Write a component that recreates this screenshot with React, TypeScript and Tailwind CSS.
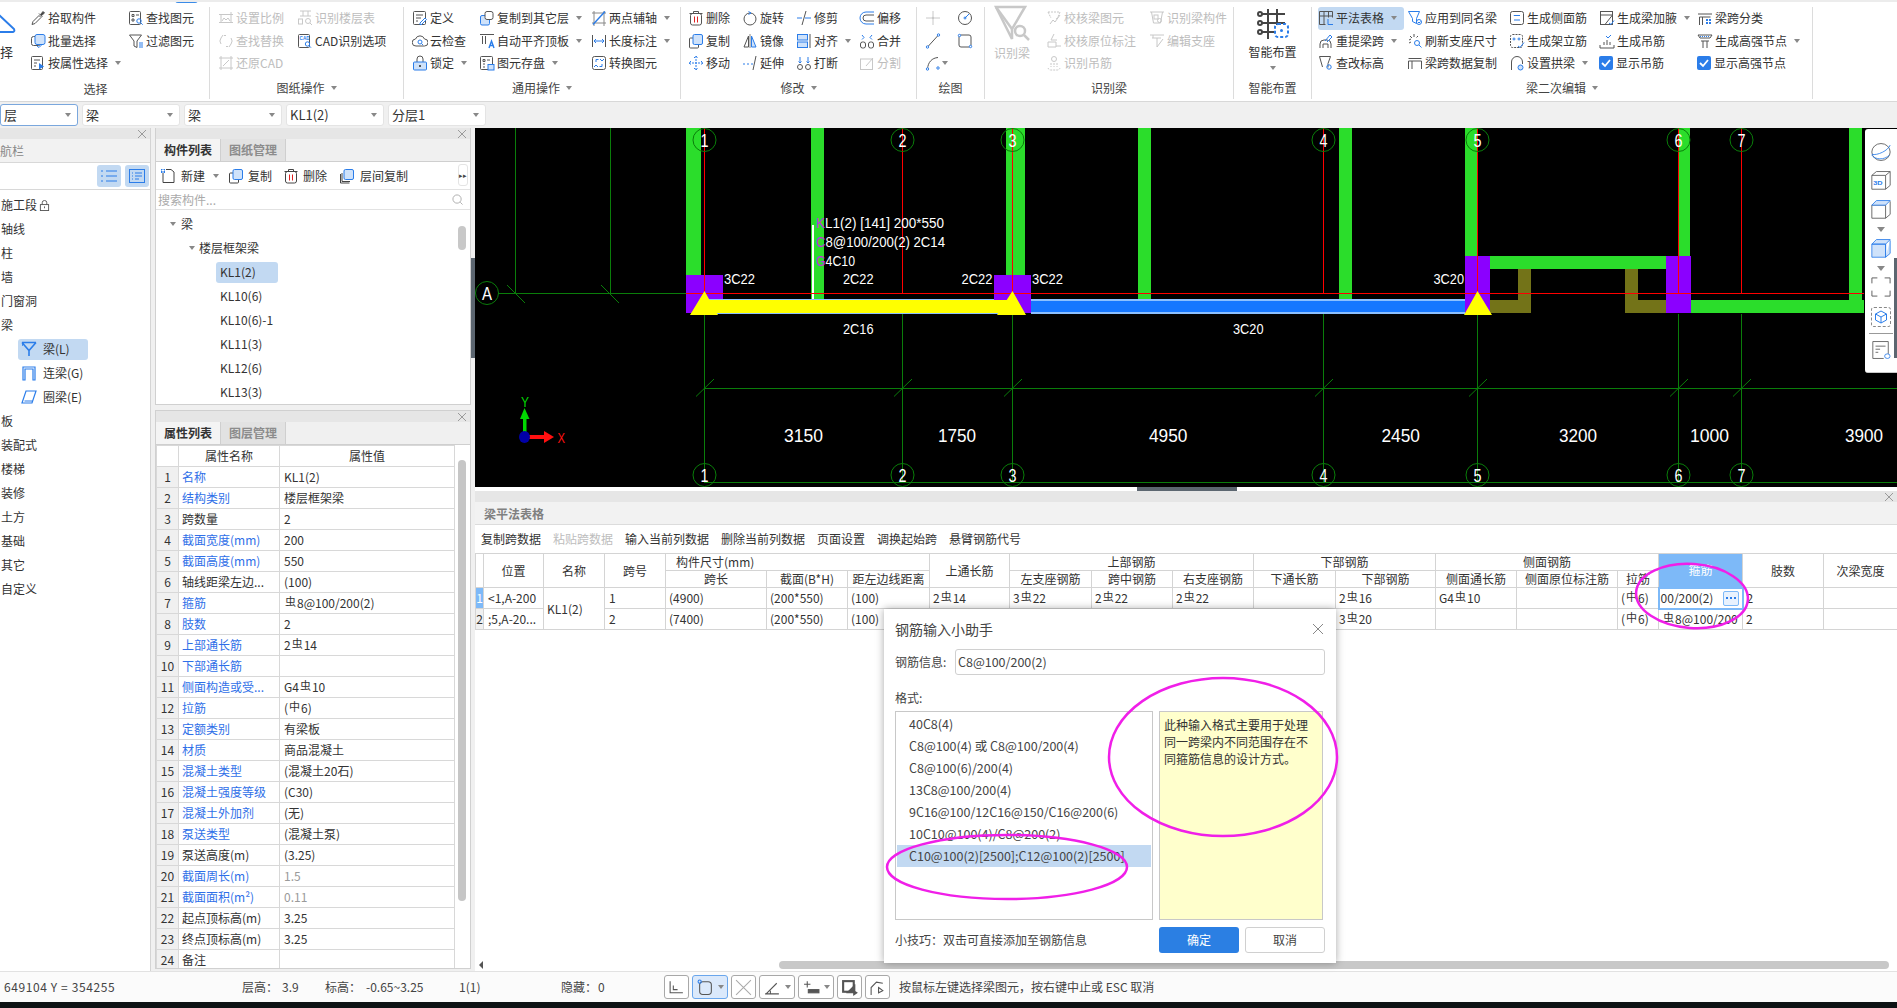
import { ReactNode } from "react";
import clsx from "clsx";

const A = "#2b7de9";

// ribbon and toolbar icons, 16x16, stroke follows the text colour
const I: Record<string, ReactNode> = {
  pick: <><path d="M2 14.5l1-3 6-6 2 2-6 6z" /><path d="M9 3.5l3.5 3.5M10.5 4.5l2.5-3 1.5 1.5-3 2.5z" fill="#444" /></>,
  batch: <><rect x="1.5" y="3.5" width="9" height="9" rx="2" /><rect x="5" y="1.5" width="10" height="10" rx="2" fill="#cfe2fa" stroke={A} /><path d="M7 13l2 1.5 3-3" stroke={A} /></>,
  attr: <><rect x="1.5" y="1.5" width="11" height="13" rx="1" /><path d="M4 5h6M4 8h3M4 11h2" /><path d="M9 8l5 3.5-5 3z" fill={A} stroke="none" /></>,
  find: <><rect x="1.5" y="1.5" width="11" height="13" rx="1" /><path d="M4 4.5h2v2H4zM8 5h3M4 9h2v2H4z" /><circle cx="11" cy="11" r="2.2" stroke={A} /><path d="M12.7 12.7l2 2" stroke={A} /></>,
  funnel: <><path d="M1.5 2h12l-4.5 6v6.5l-3-1.5V8z" /><path d="M11 10h4M11 12h4M11 14h4" stroke={A} /></>,
  scale: <><path d="M3 4v9M1 12.5h14M13 2v11M1 4.5h14" /><path d="M4 11l2-3 2 2 2-2 2 3" /></>,
  replace: <><path d="M3 11a5 5 0 0 1 0-6M13 5a5 5 0 0 1 0 6M5 2l-2 3M11 14l2-3M6 2.5h2M8 13.5h2" /></>,
  restore: <><path d="M3 1v14M13 1v14M1 3h14M1 13h14" /><path d="M5 11l6-6" /></>,
  floor: <><path d="M6 1v5M11 1v5M3 6h11M3 1h11" /><rect x="1.5" y="9" width="4" height="5" /><circle cx="11" cy="11" r="2.5" /><path d="M13 13l2 2" /></>,
  cad: <><rect x="1.5" y="1.5" width="11" height="13" rx="1" /><text x="2.6" y="7" fontSize="4.6" fill={A} stroke="none" fontFamily="Liberation Sans" fontWeight="700">CAD</text><circle cx="10.5" cy="11" r="2.2" stroke={A} /><path d="M12 12.7l2 2" stroke={A} /></>,
  define: <><rect x="1.5" y="1.5" width="12" height="13" rx="1" /><path d="M4 5h7M4 8h5M4 11h2" /><path d="M8 13l5-5 1.5 1.5-5 5H8z" stroke={A} fill="#fff" /></>,
  cloud: <><path d="M4 13a3.5 3.5 0 0 1-.5-7A4.8 4.8 0 0 1 12.5 6a3.5 3.5 0 0 1 0 7z" /><circle cx="8" cy="9" r="2" stroke={A} /><path d="M9.5 10.5l1.5 1.5" stroke={A} /></>,
  lock: <><path d="M5 7V4a3 3 0 0 1 6 0v3" /><rect x="1.5" y="7" width="13" height="8" rx="1" fill="#cfe2fa" stroke={A} /><path d="M8 10v2" stroke="#333" strokeWidth="1.6" /></>,
  copyto: <><rect x="1.5" y="5.5" width="9" height="9.5" rx="1.5" fill="#cfe2fa" stroke={A} /><rect x="6" y="1.5" width="8" height="8" rx="2" fill="#fff" /></>,
  aligntop: <><path d="M1 1.5h14M3.5 3v8M6.5 3v8" /><path d="M10 15l2.5-7 2.5 7M11 12.5h3" stroke={A} strokeWidth="1.4" /></>,
  save: <><rect x="1.5" y="1.5" width="12" height="13" rx="1" /><path d="M4 4.5h2v2H4zM8 5h3M4 9h2M4 12h2" /><rect x="9" y="9.5" width="6" height="5.5" fill="#cfe2fa" stroke={A} /></>,
  twoaxis: <><path d="M3 1v15M1 3h14M13 1v15M1 13h14" stroke="#888" /><path d="M2 14.5L14 1.5" stroke={A} strokeWidth="1.4" /></>,
  dim: <><path d="M1.5 2v12M14.5 2v12" /><path d="M3 8h10M3 8l2-2M3 8l2 2M13 8l-2-2M13 8l-2 2" stroke={A} /></>,
  convert: <><rect x="1.5" y="1.5" width="13" height="13" rx="2" /><path d="M5 7V4.5h2.5M11 9v2.5H8.5" stroke={A} /><path d="M9 4l2 2 2-2M3 12l2-2 2 2" stroke={A} /></>,
  del: <><path d="M1.5 3.5h13M5.5 3V1.5h5V3" /><rect x="2.5" y="3.5" width="11" height="11.5" rx="2" /><path d="M6.5 6.5v6M9.5 6.5v6" stroke="#e02020" /></>,
  copy: <><rect x="1.5" y="5" width="9" height="10" rx="1" /><rect x="5" y="1.5" width="9.5" height="10" rx="1.5" fill="#cfe2fa" stroke={A} /></>,
  layercopy: <><path d="M1.5 6v9h9M3 5v8.5h8" /><rect x="5" y="1.5" width="9.5" height="10" rx="1.5" fill="#cfe2fa" stroke={A} /></>,
  newdoc: <><path d="M3 3.5v11h11V4L11 1.5H6" /><rect x="1" y="1" width="4" height="4" fill={A} stroke="none" /><path d="M1.5 2.5h3M3 1v4" stroke="#fff" /></>,
  move: <><path d="M8 1v14M1 8h14M6 3l2-2 2 2M6 13l2 2 2-2M3 6L1 8l2 2M13 6l2 2-2 2" stroke={A} strokeDasharray="2 1" /></>,
  rotate: <><circle cx="8" cy="9" r="6" /><path d="M6.5 1.5L9 3 6.5 4.5" stroke={A} /></>,
  mirror: <><path d="M8 1v14" stroke="#888" /><path d="M6.5 3L2 14h4.5z" /><path d="M9.5 3L14 14H9.5z" fill="#cfe2fa" stroke={A} /></>,
  extend: <><path d="M1 9h2M5 9h2M9 9h2" stroke={A} /><path d="M11 15l3-14" /></>,
  trim: <><path d="M1 8h5M9 8h6" stroke={A} /><path d="M6 15l4-14" /></>,
  align: <><rect x="1.5" y="1.5" width="10" height="5.5" fill="#cfe2fa" stroke={A} /><rect x="1.5" y="9" width="10" height="5.5" fill="#cfe2fa" stroke={A} /><path d="M14 1v14" /></>,
  brk: <><circle cx="4" cy="12" r="2.5" /><circle cx="12" cy="12" r="2.5" /><path d="M4 2v6M12 2v6M2.5 6.5L4 8l1.5-1.5M10.5 6.5L12 8l1.5-1.5" stroke={A} /></>,
  offset: <><path d="M15 2H7a6 6 0 0 0 0 12h8" stroke={A} /><path d="M15 5H7a3 3 0 0 0 0 6h8" /></>,
  merge: <><rect x="1.5" y="9" width="5" height="6" rx="2" /><rect x="9.5" y="9" width="5" height="6" rx="2" /><path d="M3 2l2 2.5L3 6.5M13 2l-2 2.5 2 2" stroke={A} /></>,
  split: <><rect x="1.5" y="4" width="12" height="10.5" /><path d="M7 11l7-8" /></>,
  point: <><path d="M8 1v5M8 10v5M1 8h5M10 8h5" /><circle cx="8" cy="8" r="1.2" fill="currentColor" /></>,
  circle: <><circle cx="8" cy="8" r="6.5" /><path d="M8 8l4-4" stroke={A} /><circle cx="8" cy="8" r="1" stroke={A} /></>,
  line: <><path d="M3 13.5L13 2.5" /><circle cx="2.5" cy="14" r="1.2" stroke={A} fill="#fff" /><circle cx="13.5" cy="2" r="1.2" stroke={A} fill="#fff" /></>,
  rect: <><rect x="2" y="2" width="12" height="12" rx="2" /><circle cx="2.5" cy="2.5" r="1.2" stroke={A} fill="#fff" /><circle cx="13.5" cy="13.5" r="1.2" stroke={A} fill="#fff" /></>,
  arc: <><path d="M2.5 14C3 7 7 3 13 2.5" /><circle cx="2.5" cy="14" r="1.2" stroke={A} fill="#fff" /><circle cx="13" cy="13" r="1.2" stroke={A} fill="#fff" /></>,
  chk1: <><path d="M2 2h12l-2 5-2 2M2 2l3 6" strokeDasharray="2 1" /><path d="M4 14l3-4 2 2 5-7" /></>,
  chk2: <><path d="M8 1L5 7h6M2 14V9h8v5zM10 13h5" /></>,
  hang: <><circle cx="8" cy="4" r="2.5" /><path d="M2 13a3 3 0 0 0 3 2h6a3 3 0 0 0 3-2M5 8v4M11 8v4M8 8v4" strokeDasharray="2 1" /></>,
  recog: <><path d="M1 2h14M2.5 2l2 11h7l2-11" /><rect x="5" y="5" width="4" height="4" /><circle cx="10.5" cy="10.5" r="2" /></>,
  seat: <><path d="M1 2h14M4 2v3M8 5v9M3 5h9" /><path d="M8 14l6-8" /></>,
  table: <><path d="M1.5 1.5h13v6M1.5 1.5v13h6M1.5 6h13M6 1.5v13M10.5 1.5v6" /><path d="M10 9v5.5h5" stroke={A} /></>,
  apply: <><path d="M1.5 1.5h11l-3 7v5l-4-2v-3z" stroke={A} /><circle cx="12" cy="12" r="2.5" stroke={A} /><path d="M11 12l1 1 1.5-1.5" stroke={A} /></>,
  refresh: <><path d="M2 7l2-1M3 3l2 2M7 1v3M11 3L9.5 4.5M2 10l2-1" /><circle cx="10" cy="10" r="2.5" stroke={A} /><path d="M12 12l2.5 2.5" stroke={A} /></>,
  span: <><path d="M1.5 14V6h13v8M5 6v8M1.5 3.5h13" /></>,
  side: <><rect x="1.5" y="1.5" width="13" height="13" rx="2" /><path d="M5 5.5h6M5 10h6M5 5.5v.5" stroke={A} /></>,
  stand: <><rect x="1.5" y="1.5" width="12" height="13" rx="2" strokeDasharray="2 1" /><circle cx="5" cy="6" r="1" stroke={A} /><circle cx="10" cy="6" r="1" stroke={A} /><path d="M9 13l2 1.5 4-5" stroke={A} /></>,
  arch: <><path d="M2.5 15V7a5.5 5.5 0 0 1 11 0v2" /><circle cx="11.5" cy="12.5" r="2.5" fill="#cfe2fa" stroke={A} /></>,
  haunch: <><rect x="1.5" y="1.5" width="12" height="13" /><path d="M1.5 5h12L6 14.5" /><path d="M10 13l2 1.5 3-4" stroke={A} /></>,
  hangbar: <><path d="M1 12v3h14v-3M5 9v3M11 9v3M8 12V7" /><path d="M7 3l2 2 3-3" stroke={A} /></>,
  classify: <><path d="M1 4h14M2.5 15V7h11M5.5 7v8" /><path d="M9 9h2v2H9zM12 9h2v2h-2zM9 12h2v2H9zM12 12h2v2h-2z" fill={A} stroke="none" /></>,
  node: <><path d="M1 2h14l-2 3H3zM4 8h8M6 8v7M10 8v7" /><path d="M3 3.5h10" stroke={A} strokeDasharray="1 1" /></>,
  elev: <><path d="M1.5 1.5h11L10 8.5v4" /><path d="M1.5 1.5L4.5 12" /><circle cx="11" cy="12" r="2.2" stroke={A} /></>,
  respan: <><path d="M2 15v-4a4 4 0 0 1 4-4h3a4 4 0 0 1 4 4v4M5 15v-4h5v4" /><path d="M7 8l5-6 2 2-5 5" stroke={A} /></>,
};

function Ico({ n, s = 16, c }: { n: string; s?: number; c?: string }) {
  return (
    <svg viewBox="0 0 16 16" width={s} height={s} fill="none" stroke="currentColor" strokeWidth="1" className={clsx("shrink-0", c)}>
      {I[n]}
    </svg>
  );
}

function Caret({ c }: { c?: string }) {
  return <span className={clsx("inline-block w-0 h-0 border-x-[3px] border-x-transparent border-t-[4px] border-t-[#888]", c)} />;
}

type It = { i?: string; t: string; caret?: boolean; d?: boolean; on?: boolean; chk?: boolean };

function Item({ i, t, caret, d, on, chk }: It) {
  return (
    <div className={clsx("flex items-center h-[22.5px] whitespace-nowrap", d ? "text-[#bdbdbd]" : "text-[#333]", on && "bg-[#c2d9f2] rounded-[3px]")}>
      {chk ? (
        <svg viewBox="0 0 14 14" width="14" height="14" className="mr-[3px] shrink-0">
          <rect width="14" height="14" rx="2" fill={A} />
          <path d="M3 7l3 3 5-6" stroke="#fff" strokeWidth="1.8" fill="none" />
        </svg>
      ) : (
        i && <Ico n={i} c={clsx("mr-[2px]", d ? "text-[#c8c8c8]" : "text-[#555]")} />
      )}
      <span>{t}</span>
      {caret && <Caret c="ml-[7px]" />}
    </div>
  );
}

function Col({ w, items }: { w: string; items: It[] }) {
  return (
    <div className={clsx("flex flex-col shrink-0", w)}>
      {items.map((x) => (
        <Item key={x.t} {...x} />
      ))}
    </div>
  );
}

function Group({ w, pad, label, caret, lc, children }: { w: string; pad: string; label: string; caret?: boolean; lc?: string; children: ReactNode }) {
  return (
    <div className={clsx("flex flex-col shrink-0 h-[92px] border-r border-[#dcdcdc] box-border", w)}>
      <div className={clsx("flex h-[68px]", pad)}>{children}</div>
      <div className={clsx("flex items-center justify-center h-[20px] mt-[3px] text-[#444]", lc)}>
        {label}
        {caret && <Caret c="ml-[6px]" />}
      </div>
    </div>
  );
}

function Ribbon() {
  return (
    <div className="relative h-[101px] bg-white border-t-2 border-[#ececec] pt-[5px] flex overflow-hidden">
      <div className="absolute left-[175px] -top-[2px] w-[23px] h-[3px] bg-[#3a8be8] rounded-b" />
      <Group w="w-[210px]" pad="" label="选择" lc="pr-[18px] pt-[2px]">
        <div className="w-[30px] shrink-0 overflow-hidden text-[#333] pt-[5px]">
          <svg width="16" height="21" viewBox="0 0 16 21" fill="none" stroke={A} strokeWidth="2">
            <path d="M-4 0L14 17Q15 19.5 13 20H-4" />
          </svg>
          <div className="-ml-[13px] mt-[11px] text-[13px] leading-[16px] whitespace-nowrap">选择</div>
        </div>
        <Col w="w-[98px]" items={[{ i: "pick", t: "拾取构件" }, { i: "batch", t: "批量选择" }, { i: "attr", t: "按属性选择", caret: true }]} />
        <Col w="w-[80px]" items={[{ i: "find", t: "查找图元" }, { i: "funnel", t: "过滤图元" }]} />
      </Group>
      <Group w="w-[194px]" pad="pl-[8px]" label="图纸操作" caret>
        <Col w="w-[79px]" items={[{ i: "scale", t: "设置比例", d: true }, { i: "replace", t: "查找替换", d: true }, { i: "restore", t: "还原CAD", d: true }]} />
        <Col w="w-[100px]" items={[{ i: "floor", t: "识别楼层表", d: true }, { i: "cad", t: "CAD识别选项" }]} />
      </Group>
      <Group w="w-[277px]" pad="pl-[8px]" label="通用操作" caret>
        <Col w="w-[67px]" items={[{ i: "define", t: "定义" }, { i: "cloud", t: "云检查" }, { i: "lock", t: "锁定", caret: true }]} />
        <Col w="w-[112px]" items={[{ i: "copyto", t: "复制到其它层", caret: true }, { i: "aligntop", t: "自动平齐顶板", caret: true }, { i: "save", t: "图元存盘", caret: true }]} />
        <Col w="w-[85px]" items={[{ i: "twoaxis", t: "两点辅轴", caret: true }, { i: "dim", t: "长度标注", caret: true }, { i: "convert", t: "转换图元" }]} />
      </Group>
      <Group w="w-[236px]" pad="pl-[7px]" label="修改" caret>
        <Col w="w-[54px]" items={[{ i: "del", t: "删除" }, { i: "copy", t: "复制" }, { i: "move", t: "移动" }]} />
        <Col w="w-[54px]" items={[{ i: "rotate", t: "旋转" }, { i: "mirror", t: "镜像" }, { i: "extend", t: "延伸" }]} />
        <Col w="w-[63px]" items={[{ i: "trim", t: "修剪" }, { i: "align", t: "对齐", caret: true }, { i: "brk", t: "打断" }]} />
        <Col w="w-[50px]" items={[{ i: "offset", t: "偏移" }, { i: "merge", t: "合并" }, { i: "split", t: "分割", d: true }]} />
      </Group>
      <Group w="w-[68px]" pad="pl-[8px]" label="绘图">
        <div className="w-[32px] flex flex-col shrink-0">
          <div className="h-[22.5px] flex items-center"><Ico n="point" c="text-[#c8c8c8]" /></div>
          <div className="h-[22.5px] flex items-center"><Ico n="line" c="text-[#555]" /></div>
          <div className="h-[22.5px] flex items-center"><Ico n="arc" c="text-[#555]" /><Caret c="ml-[1px]" /></div>
        </div>
        <div className="flex flex-col">
          <div className="h-[22.5px] flex items-center"><Ico n="circle" c="text-[#555]" /></div>
          <div className="h-[22.5px] flex items-center"><Ico n="rect" c="text-[#555]" /></div>
        </div>
      </Group>
      <Group w="w-[249px]" pad="pl-[9px]" label="识别梁">
        <div className="w-[52px] shrink-0 text-[#bdbdbd] flex flex-col -mt-[2px]">
          <svg viewBox="0 0 36 36" width="36" height="36" fill="none" stroke="#c8c8c8" strokeWidth="2.5">
            <path d="M2 2h29L18 24v10z" />
            <path d="M2 2l16 22" />
            <circle cx="26" cy="26" r="5" />
            <path d="M30 30l5 5" />
          </svg>
          <span className="mt-[3px]">识别梁</span>
        </div>
        <Col w="w-[103px]" items={[{ i: "chk1", t: "校核梁图元", d: true }, { i: "chk2", t: "校核原位标注", d: true }, { i: "hang", t: "识别吊筋", d: true }]} />
        <Col w="w-[80px]" items={[{ i: "recog", t: "识别梁构件", d: true }, { i: "seat", t: "编辑支座", d: true }]} />
      </Group>
      <Group w="w-[78px]" pad="" label="智能布置">
        <div className="w-full flex flex-col items-center mt-[1px] text-[#333]">
          <svg viewBox="0 0 32 32" width="32" height="32" fill="none" stroke="#444" strokeWidth="2">
            <path d="M4 6h24M4 15h24M4 24h14M11 1v30M20 1v16" />
            <circle cx="3" cy="6" r="2" />
            <circle cx="3" cy="15" r="2" />
            <circle cx="3" cy="24" r="2" />
            <rect x="18" y="16" width="13" height="13" rx="3" stroke={A} strokeDasharray="3 2" />
            <circle cx="24.5" cy="22.5" r="1.5" fill={A} stroke="none" />
          </svg>
          <span className="mt-[4px] leading-[16px]">智能布置</span>
          <Caret c="mt-[6px]" />
        </div>
      </Group>
      <Group w="w-[501px]" pad="pl-[6px]" label="梁二次编辑" caret>
        <Col w="w-[89px] pr-[3px]" items={[{ i: "table", t: "平法表格", caret: true, on: true }, { i: "respan", t: "重提梁跨", caret: true }, { i: "elev", t: "查改标高" }]} />
        <Col w="w-[102px]" items={[{ i: "apply", t: "应用到同名梁" }, { i: "refresh", t: "刷新支座尺寸" }, { i: "span", t: "梁跨数据复制" }]} />
        <Col w="w-[90px]" items={[{ i: "side", t: "生成侧面筋" }, { i: "stand", t: "生成架立筋" }, { i: "arch", t: "设置拱梁", caret: true }]} />
        <Col w="w-[98px]" items={[{ i: "haunch", t: "生成梁加腋", caret: true }, { i: "hangbar", t: "生成吊筋" }, { t: "显示吊筋", chk: true }]} />
        <Col w="w-[105px]" items={[{ i: "classify", t: "梁跨分类" }, { i: "node", t: "生成高强节点", caret: true }, { t: "显示高强节点", chk: true }]} />
      </Group>
    </div>
  );
}

function Combo({ t, w, on }: { t: string; w: string; on?: boolean }) {
  return (
    <div className={clsx("h-[22px] bg-white rounded-[3px] border flex items-center justify-between pl-[3px] pr-[6px] text-[13px] text-[#333] shrink-0", w, on ? "border-[#7aa7dd]" : "border-[#e4e4e4]")}>
      <span>{t}</span>
      <Caret c="border-t-[#555]" />
    </div>
  );
}

function ComboBar() {
  return (
    <div className="h-[27px] bg-[#f0f0f0] border-t border-[#d8d8d8] flex items-center gap-[4px]">
      <Combo t="层" w="w-[78px]" on />
      <Combo t="梁" w="w-[98px]" />
      <Combo t="梁" w="w-[98px]" />
      <Combo t="KL1(2)" w="w-[98px]" />
      <Combo t="分层1" w="w-[98px]" />
    </div>
  );
}

function PanelTop() {
  return (
    <div className="h-[11px] bg-[#e6e6e6] flex items-center justify-end pr-[4px] shrink-0">
      <svg viewBox="0 0 8 8" width="8" height="8" stroke="#9a9a9a" fill="none"><path d="M0 0l8 8M8 0L0 8" /></svg>
    </div>
  );
}

function NavRow({ t }: { t: string }) {
  return <div className="h-[24px] flex items-center pl-[1px] text-[#333]">{t}</div>;
}

function NavSub({ t, on, children }: { t: string; on?: boolean; children: ReactNode }) {
  return (
    <div className="h-[24px] flex items-center pl-[18px]">
      <div className={clsx("w-[70px] h-[21px] flex items-center pl-[3px] rounded-[3px] text-[#333]", on && "bg-[#c2d9f2]")}>
        <svg viewBox="0 0 16 16" width="16" height="16" fill="none" stroke={A} strokeWidth="1.2" className="mr-[6px]">{children}</svg>
        {t}
      </div>
    </div>
  );
}

function NavPanel() {
  return (
    <div className="w-[151px] shrink-0 bg-white border-r border-[#d4d4d4] flex flex-col overflow-hidden">
      <PanelTop />
      <div className="h-[23px] bg-[#f2f2f2] flex items-center overflow-hidden text-[#888]">
        <span className="-ml-[12px] whitespace-nowrap">导航栏</span>
      </div>
      <div className="h-[28px] border-y border-[#d8d8d8] flex items-center justify-end gap-[4px] pr-[1px]">
        <div className="w-[24px] h-[22px] bg-[#c2d9f2] rounded-[3px] flex items-center justify-center">
          <svg viewBox="0 0 16 16" width="16" height="16" stroke={A} fill="none"><path d="M5 3h11M5 8h11M5 13h11M0 3h2M0 8h2M0 13h2" /></svg>
        </div>
        <div className="w-[24px] h-[22px] bg-[#c2d9f2] rounded-[3px] flex items-center justify-center">
          <svg viewBox="0 0 16 16" width="16" height="16" stroke={A} fill="none"><rect x=".5" y="1.5" width="15" height="13" /><path d="M3 5h1M6 5h7M3 8h1M6 8h7M3 11h1M6 11h4" /></svg>
        </div>
      </div>
      <div className="pt-[3px]">
        <div className="h-[24px] flex items-center pl-[1px] text-[#333]">
          施工段
          <svg viewBox="0 0 12 12" width="11" height="11" fill="none" stroke="#555" className="ml-[2px]"><path d="M3.5 5V3a2.5 2.5 0 0 1 5 0v2" /><rect x="1.5" y="5" width="9" height="6.5" /><path d="M6 7v2" /></svg>
        </div>
        {["轴线", "柱", "墙", "门窗洞", "梁"].map((t) => <NavRow key={t} t={t} />)}
        <NavSub t="梁(L)" on><path d="M1 1.5h14M1 1.5l7 8 7-8M8 9.5V15M1 4h1" strokeWidth="1.6" /></NavSub>
        <NavSub t="连梁(G)"><path d="M2 15V2h12v13h-2V4H4v11z" /></NavSub>
        <NavSub t="圈梁(E)"><path d="M5 2h10l-4 12H1zM3.5 12h8" /></NavSub>
        {["板", "装配式", "楼梯", "装修", "土方", "基础", "其它", "自定义"].map((t) => <NavRow key={t} t={t} />)}
      </div>
    </div>
  );
}

function Tabs({ a, b }: { a: string; b: string }) {
  return (
    <div className="h-[23px] bg-[#f0f0f0] flex border-b border-[#cfcfcf] shrink-0">
      <div className="w-[65px] bg-[#f4f4f4] border-r border-[#cfcfcf] flex items-center justify-center font-bold text-[#333]">{a}</div>
      <div className="w-[65px] bg-[#e2e2e2] border-r border-[#cfcfcf] flex items-center justify-center font-bold text-[#8c8c8c]">{b}</div>
    </div>
  );
}

const PROPS: [string, ReactNode, boolean, boolean?][] = [
  ["名称", "KL1(2)", true],
  ["结构类别", "楼层框架梁", true],
  ["跨数量", "2", false],
  ["截面宽度(mm)", "200", true],
  ["截面高度(mm)", "550", true],
  ["轴线距梁左边...", "(100)", false],
  ["箍筋", <><Rb />8@100/200(2)</>, true],
  ["肢数", "2", true],
  ["上部通长筋", <>2<Rb />14</>, true],
  ["下部通长筋", "", true],
  ["侧面构造或受...", <>G4<Rb />10</>, true],
  ["拉筋", <>(<Rb g="中" />6)</>, true],
  ["定额类别", "有梁板", true],
  ["材质", "商品混凝土", true],
  ["混凝土类型", "(混凝土20石)", true],
  ["混凝土强度等级", "(C30)", true],
  ["混凝土外加剂", "(无)", true],
  ["泵送类型", "(混凝土泵)", true],
  ["泵送高度(m)", "(3.25)", false],
  ["截面周长(m)", "1.5", true, true],
  ["截面面积(m²)", "0.11", true, true],
  ["起点顶标高(m)", "3.25", false],
  ["终点顶标高(m)", "3.25", false],
  ["备注", "", false],
];

// the rebar grade mark of the software, printed small and raised
function Rb({ g = "虫" }: { g?: string }) {
  return <span className="inline-block text-[11px] leading-none -translate-y-[2px] mx-px">{g}</span>;
}

function ListPanel() {
  const tool = "flex items-center text-[#333] whitespace-nowrap";
  return (
    <div className="w-[316px] h-[277px] shrink-0 bg-white border border-t-0 border-[#d0d0d0] flex flex-col overflow-hidden">
      <PanelTop />
      <Tabs a="构件列表" b="图纸管理" />
      <div className="relative h-[28px] border-b border-[#e2e2e2] flex items-center pl-[4px] shrink-0">
        <div className={tool}><Ico n="newdoc" c="text-[#444] mr-[5px]" />新建<Caret c="ml-[8px] mr-[9px]" /></div>
        <div className={tool}><Ico n="copy" c="text-[#444] mr-[4px]" />复制</div>
        <div className={clsx(tool, "ml-[11px]")}><Ico n="del" c="text-[#444] mr-[4px]" />删除</div>
        <div className={clsx(tool, "ml-[12px]")}><Ico n="layercopy" c="text-[#444] mr-[5px]" />层间复制</div>
        <div className="absolute right-[2px] top-[2px] w-[10px] h-[22px] border border-[#e4e4e4] rounded-[3px] flex items-center justify-center text-[7px] text-[#444]">▸▸</div>
      </div>
      <div className="h-[20px] border-b border-[#e2e2e2] flex items-center justify-between pl-[2px] pr-[7px] text-[#aaa] shrink-0">
        搜索构件...
        <svg viewBox="0 0 12 12" width="11" height="11" fill="none" stroke="#aaa"><circle cx="5.5" cy="5.5" r="4.5" /><path d="M9 9l2.5 2.5" /></svg>
      </div>
      <div className="relative flex-1 text-[#333] pt-[2px]">
        <div className="absolute right-[4px] top-[16px] w-[8px] h-[24px] rounded-full bg-[#c8c8c8]" />
        <div className="h-[24px] flex items-center pl-[14px]"><Caret c="border-x-[3.5px] mr-[5px]" />梁</div>
        <div className="h-[24px] flex items-center pl-[33px]"><Caret c="border-x-[3.5px] mr-[4px]" />楼层框架梁</div>
        <div className="h-[24px] flex items-center pl-[60px]"><div className="w-[62px] h-[21px] bg-[#c2d9f2] rounded-[3px] flex items-center pl-[4px]">KL1(2)</div></div>
        {["KL10(6)", "KL10(6)-1", "KL11(3)", "KL12(6)", "KL13(3)"].map((t) => (
          <div key={t} className="h-[24px] flex items-center pl-[64px]">{t}</div>
        ))}
      </div>
    </div>
  );
}

function PropPanel() {
  const cell = "border border-[#d8d8d8] h-[21px] p-0 overflow-hidden whitespace-nowrap";
  return (
    <div className="w-[316px] h-[559px] shrink-0 bg-white border border-[#d0d0d0] flex flex-col overflow-hidden relative">
      <PanelTop />
      <Tabs a="属性列表" b="图层管理" />
      <div className="absolute right-[4px] top-[49px] w-[8px] h-[441px] rounded-full bg-[#c6c6c6]" />
      <table className="table-fixed border-collapse w-[298px] text-[#333]">
        <colgroup>
          <col className="w-[22px]" />
          <col className="w-[101px]" />
          <col className="w-[175px]" />
        </colgroup>
        <thead>
          <tr>
            <th className={clsx(cell, "font-normal")}></th>
            <th className={clsx(cell, "font-normal text-center")}>属性名称</th>
            <th className={clsx(cell, "font-normal text-center")}>属性值</th>
          </tr>
        </thead>
        <tbody>
          {PROPS.map(([k, v, blue, dim], i) => (
            <tr key={i}>
              <td className={clsx(cell, "bg-[#f0f0f0] text-center")}>{i + 1}</td>
              <td className={clsx(cell, "pl-[3px]", blue ? "text-[#2f6fe8]" : "text-[#333]")}>{k}</td>
              <td className={clsx(cell, "pl-[4px]", dim && "text-[#9a9a9a]")}>{v}</td>
            </tr>
          ))}
        </tbody>
      </table>
    </div>
  );
}

const AXES: [string, number][] = [["1", 704.5], ["2", 902.5], ["3", 1012.5], ["4", 1323.5], ["5", 1477.5], ["6", 1678.5], ["7", 1741.5]];

function T({ x0, x1, y, s = 15, f = "#fff", children }: { x0: number; x1: number; y: number; s?: number; f?: string; children: ReactNode }) {
  return (
    <text x={x0} y={y} fontSize={s} fill={f} textLength={x1 - x0} lengthAdjust="spacingAndGlyphs" fontFamily="Liberation Sans">
      {children}
    </text>
  );
}

function Bubble({ x, y, t }: { x: number; y: number; t: string }) {
  return (
    <>
      <circle cx={x} cy={y} r="11.5" fill="none" stroke="#0a7d0a" />
      <T x0={x - 4} x1={x + 4} y={y + 7} s={19}>{t}</T>
    </>
  );
}

function Drawing() {
  const G = "#0a7d0a";
  const W = "#2bdd2b";
  const P = "#8b00ff";
  const O = "#737318";
  return (
    <svg viewBox="475 128 1422 359" width="1422" height="359" className="block" shapeRendering="crispEdges">
      <path d="M515.5 128V293M610.5 128V293M498 293.5H686" stroke={G} fill="none" />
      {[[686, 128, 15, 147], [811, 128, 13, 171], [1006, 128, 19, 147], [1138, 128, 13, 171], [1339, 128, 13, 171], [1465, 128, 13, 128], [1678, 128, 12, 128], [1849, 128, 13, 172], [1490, 256, 176, 13], [1691, 300, 173, 13]].map(([x, y, w, h], i) => (
        <rect key={i} x={x} y={y} width={w} height={h} fill={W} />
      ))}
      {[[1518, 269, 13, 44], [1490, 300, 41, 13], [1625, 269, 13, 44], [1625, 300, 41, 13]].map(([x, y, w, h], i) => (
        <rect key={i} x={x} y={y} width={w} height={h} fill={O} />
      ))}
      {[[686, 275, 37, 38], [994, 275, 37, 38], [1465, 256, 25, 57], [1666, 256, 25, 57]].map(([x, y, w, h], i) => (
        <rect key={i} x={x} y={y} width={w} height={h} fill={P} />
      ))}
      <rect x="704" y="299" width="290" height="1" fill="#8cc0ff" />
      <rect x="704" y="313" width="308" height="1" fill="#8cc0ff" />
      <rect x="704" y="300" width="308" height="13" fill="#ffff00" />
      <rect x="1031" y="299" width="434" height="15" fill="#8cc0ff" />
      <rect x="1031" y="301" width="434" height="11" fill="#1677ff" />
      <rect x="812" y="225" width="1.5" height="74" fill="#fff" />
      {AXES.map(([, x]) => (
        <g key={x}>
          <path d={`M${x} 128V293`} stroke="#ff0000" fill="none" />
          <path d={`M${x} 314V482`} stroke={G} fill="none" />
        </g>
      ))}
      <path d="M686 293.5H1864" stroke="#ff0000" fill="none" />
      <path d="M704 388.5H1897M704 482.5H1897" stroke={G} fill="none" />
      <g shapeRendering="auto">
        <path d="M507 285L525 303M601 285L619 303" stroke={G} fill="none" />
        {AXES.map(([, x]) => (
          <path key={x} d={`M${x - 8.5} 396.5L${x + 9.5} 379`} stroke={G} fill="none" />
        ))}
        <path d="M704.5 291L690 315H718zM1012.5 291L997 315H1026zM1477.5 291L1464 315H1492z" fill="#ffff00" />
        <circle cx="487" cy="293" r="11.5" fill="none" stroke={G} />
        <T x0={482} x1={492} y={300} s={19}>A</T>
        {AXES.map(([t, x]) => (
          <g key={t}>
            <Bubble x={x} y={140} t={t} />
            <Bubble x={x} y={475} t={t} />
          </g>
        ))}
        <T x0={816} x1={944} y={228}><tspan fill="#c030e0">K</tspan>L1(2) [141] 200*550</T>
        <T x0={816} x1={945} y={247}><tspan fill="#c030e0">C</tspan>8@100/200(2) 2C14</T>
        <T x0={816} x1={855} y={265.5}><tspan fill="#c030e0">G</tspan>4C10</T>
        <T x0={724} x1={755} y={284}>3C22</T>
        <T x0={843} x1={873.5} y={284}>2C22</T>
        <T x0={961.5} x1={992.5} y={284}>2C22</T>
        <T x0={1032} x1={1063} y={284}>3C22</T>
        <T x0={843} x1={873.5} y={333.5}>2C16</T>
        <T x0={1433.5} x1={1464} y={284}>3C20</T>
        <T x0={1233} x1={1263.5} y={333.5}>3C20</T>
        {[["3150", 784, 823], ["1750", 938, 976], ["4950", 1149, 1187.5], ["2450", 1381.5, 1420], ["3200", 1559, 1597], ["1000", 1690, 1729], ["3900", 1845, 1883]].map(([t, a, b]) => (
          <T key={t as string} x0={a as number} x1={b as number} y={441.5} s={18}>{t}</T>
        ))}
        <rect x="523" y="418" width="3.5" height="16" fill="#00d800" />
        <path d="M524.5 408L520 419H529.5z" fill="#00d800" />
        <rect x="528" y="435" width="17" height="4" fill="#ff1010" />
        <path d="M544 431L554 437L544 443z" fill="#ff1010" />
        <ellipse cx="524.5" cy="437" rx="5.5" ry="6" fill="#0000a8" />
        <T x0={521} x1={529} y={406.5} s={15} f="#00d800">Y</T>
        <T x0={557.5} x1={565} y={442.5} s={15} f="#ff1010">X</T>
      </g>
    </svg>
  );
}

function Palette() {
  const box = "block mx-auto shrink-0";
  return (
    <div className="absolute right-0 top-[1px] w-[32px] h-[244px] bg-white rounded-l-[3px] border-b border-[#c8c8c8] flex flex-col items-center pt-[13px] overflow-hidden">
      <svg viewBox="0 0 24 26" width="22" height="20" preserveAspectRatio="none" fill="none" stroke={A} className={box}><ellipse cx="12" cy="13" rx="10" ry="11" stroke="#555" /><path d="M2 16c6 2 18-5 20-12" /><path d="M2 17c3 6 14 7 19 0" /></svg>
      <svg viewBox="0 0 24 26" width="22" height="20" preserveAspectRatio="none" fill="none" stroke="#555" className={clsx(box, "mt-[8px]")}><path d="M2 7l5-5h15v18l-5 5M2 7h15v18H2zM17 7l5-5" /><text x="3.5" y="20" fontSize="8" fill={A} stroke="none" fontFamily="Liberation Sans" fontWeight="700">3D</text></svg>
      <svg viewBox="0 0 24 26" width="22" height="20" preserveAspectRatio="none" fill="none" stroke="#555" className={clsx(box, "mt-[9px]")}><path d="M2 8h15v17H2zM17 25l5-5V3" /><path d="M2 8l5-6h15l-5 6z" fill="#cfe2fa" stroke={A} /></svg>
      <Caret c="mt-[8px] border-x-[4px] border-t-[5px] border-t-[#666] shrink-0" />
      <svg viewBox="0 0 24 26" width="22" height="20" preserveAspectRatio="none" fill="#cfe2fa" stroke={A} className={clsx(box, "mt-[6px]")}><path d="M2 8h15v17H2zM17 25l5-5V3M2 8l5-6h15l-5 6zM17 8v17" /></svg>
      <Caret c="mt-[8px] border-x-[4px] border-t-[5px] border-t-[#666] shrink-0" />
      <svg viewBox="0 0 22 22" width="20" height="20" fill="none" stroke="#555" className={clsx(box, "mt-[6px]")}><path d="M1 7V1h6M15 1h6v6M21 15v6h-6M7 21H1v-6" /></svg>
      <div className="w-[20px] h-[20px] mt-[10px] border border-dashed border-[#888] rounded-[3px] flex items-center justify-center shrink-0">
        <svg viewBox="0 0 14 14" width="14" height="14" fill="none" stroke={A}><path d="M7 1l5.5 3v6L7 13l-5.5-3V4zM1.5 4L7 7l5.5-3M7 7v6" /></svg>
      </div>
      <div className="w-[24px] h-px bg-[#999] mt-[6px] shrink-0" />
      <svg viewBox="0 0 22 26" width="20" height="20" preserveAspectRatio="none" fill="none" stroke="#555" className={clsx(box, "mt-[6px]")}><path d="M2 2h17v16M2 2v22h12" /><path d="M5 8h11M5 12h5M5 16h3" /><circle cx="18" cy="21" r="3" stroke={A} /></svg>
    </div>
  );
}

const COLS = ["w-[8px]", "w-[60px]", "w-[61px]", "w-[61px]", "w-[101px]", "w-[81px]", "w-[82px]", "w-[80px]", "w-[82px]", "w-[81px]", "w-[81px]", "w-[82px]", "w-[100px]", "w-[81px]", "w-[101px]", "w-[41px]", "w-[84px]", "w-[81px]", "w-[74px]"];

function BeamTable() {
  const h = "border border-[#d4d4d4] font-normal p-0 text-center whitespace-nowrap overflow-hidden";
  const c = "border border-[#d4d4d4] h-[21px] p-0 pl-[3px] whitespace-nowrap overflow-hidden";
  const hr = "h-[17px] leading-[16px]";
  return (
    <table className="table-fixed border-collapse w-[1422px] text-[#333]">
      <colgroup>{COLS.map((w, i) => <col key={i} className={w} />)}</colgroup>
      <thead>
        <tr className={hr}>
          <th rowSpan={2} className={h}></th>
          <th rowSpan={2} className={h}>位置</th>
          <th rowSpan={2} className={h}>名称</th>
          <th rowSpan={2} className={h}>跨号</th>
          <th colSpan={3} className={clsx(h, "text-left pl-[10px]")}>构件尺寸(mm)</th>
          <th rowSpan={2} className={h}>上通长筋</th>
          <th colSpan={3} className={h}>上部钢筋</th>
          <th colSpan={2} className={h}>下部钢筋</th>
          <th colSpan={3} className={h}>侧面钢筋</th>
          <th rowSpan={2} className={clsx(h, "bg-[#7db9f8] text-white")}>箍筋</th>
          <th rowSpan={2} className={h}>肢数</th>
          <th rowSpan={2} className={h}>次梁宽度</th>
        </tr>
        <tr className={hr}>
          {["跨长", "截面(B*H)", "距左边线距离", "左支座钢筋", "跨中钢筋", "右支座钢筋", "下通长筋", "下部钢筋", "侧面通长筋", "侧面原位标注筋", "拉筋"].map((t) => (
            <th key={t} className={h}>{t}</th>
          ))}
        </tr>
      </thead>
      <tbody>
        <tr>
          <td className="border border-[#d4d4d4] p-0 bg-[#7db9f8] text-white text-center">1</td>
          <td className={clsx(c, "pl-[4px]")}>&lt;1,A-200</td>
          <td rowSpan={2} className={c}>KL1(2)</td>
          <td className={clsx(c, "pl-[4px]")}>1</td>
          <td className={c}>(4900)</td>
          <td className={c}>(200*550)</td>
          <td className={c}>(100)</td>
          <td className={c}>2<Rb />14</td>
          <td className={c}>3<Rb />22</td>
          <td className={c}>2<Rb />22</td>
          <td className={c}>2<Rb />22</td>
          <td className={c}></td>
          <td className={c}>2<Rb />16</td>
          <td className={c}>G4<Rb />10</td>
          <td className={c}></td>
          <td className={c}>(<Rb g="中" />6)</td>
          <td className="border-2 border-[#7db9f8] p-0 pl-[1px]">
            <div className="flex items-center justify-between pr-[3px]">
              <span>00/200(2)</span>
              <span className="w-[16px] h-[15px] border border-[#7db9f8] rounded-[2px] bg-[#e8f2fe] flex items-center justify-center gap-[2px]">
                <i className="w-[2px] h-[2px] bg-[#2b7de9]" />
                <i className="w-[2px] h-[2px] bg-[#2b7de9]" />
                <i className="w-[2px] h-[2px] bg-[#2b7de9]" />
              </span>
            </div>
          </td>
          <td className={c}>2</td>
          <td className={c}></td>
        </tr>
        <tr>
          <td className="border border-[#d4d4d4] p-0 bg-[#f0f0f0] text-center">2</td>
          <td className={clsx(c, "pl-[4px]")}>;5,A-20...</td>
          <td className={clsx(c, "pl-[4px]")}>2</td>
          <td className={c}>(7400)</td>
          <td className={c}>(200*550)</td>
          <td className={c}>(100)</td>
          <td className={c}></td>
          <td className={c}></td>
          <td className={c}></td>
          <td className={c}></td>
          <td className={c}></td>
          <td className={c}>3<Rb />20</td>
          <td className={c}></td>
          <td className={c}></td>
          <td className={c}>(<Rb g="中" />6)</td>
          <td className={c}><Rb />8@100/200</td>
          <td className={c}>2</td>
          <td className={c}></td>
        </tr>
      </tbody>
    </table>
  );
}

function TablePanel() {
  return (
    <div className="flex-1 bg-white flex flex-col relative overflow-hidden">
      <PanelTop />
      <div className="h-[23px] bg-[#f2f2f2] border-b border-[#dcdcdc] flex items-center pl-[9px] pt-[2px] font-bold text-[#808080] shrink-0">梁平法表格</div>
      <div className="h-[28px] flex items-center pl-[6px] gap-[12px] text-[#333] shrink-0">
        <span>复制跨数据</span>
        <span className="text-[#bdbdbd]">粘贴跨数据</span>
        <span>输入当前列数据</span>
        <span>删除当前列数据</span>
        <span>页面设置</span>
        <span>调换起始跨</span>
        <span>悬臂钢筋代号</span>
      </div>
      <BeamTable />
      <div className="absolute left-0 right-0 bottom-[2px] h-[8px] flex items-center">
        <span className="ml-[4px] w-0 h-0 border-y-[4px] border-y-transparent border-r-[4px] border-r-[#555]" />
        <div className="ml-[296px] w-[1110px] h-[8px] rounded-full bg-[#c8c8c8]" />
      </div>
    </div>
  );
}

function Dialog() {
  const fmts = ["40C8(4)", "C8@100(4) 或 C8@100/200(4)", "C8@100(6)/200(4)", "13C8@100/200(4)", "9C16@100/12C16@150/C16@200(6)", "10C10@100(4)/C8@200(2)", "C10@100(2)[2500];C12@100(2)[2500]"];
  return (
    <div className="absolute left-[884px] top-[609px] w-[452px] h-[354px] bg-white shadow-[0_0_8px_rgba(0,0,0,0.35)] z-10 px-[11px] text-[#444] flex flex-col">
      <div className="h-[40px] flex items-center justify-between shrink-0">
        <span className="text-[14px]">钢筋输入小助手</span>
        <svg viewBox="0 0 10 10" width="10" height="10" stroke="#888" fill="none" className="mr-[2px]"><path d="M0 0l10 10M10 0L0 10" /></svg>
      </div>
      <div className="flex items-center h-[26px] shrink-0">
        <span className="w-[60px]">钢筋信息:</span>
        <div className="w-[370px] h-[26px] border border-[#d0d0d0] rounded-[3px] flex items-center pl-[2px] text-[12.5px]">C8@100/200(2)</div>
      </div>
      <div className="h-[36px] flex items-center pt-[9px] shrink-0">格式:</div>
      <div className="flex gap-[6px] h-[209px] shrink-0">
        <div className="w-[258px] border border-[#c8c8c8] p-px overflow-hidden">
          {fmts.map((t, i) => (
            <div key={t} className={clsx("h-[22px] flex items-center pl-[12px] whitespace-nowrap text-[12.5px]", i === 6 && "bg-[#c2d9f2]")}>{t}</div>
          ))}
        </div>
        <div className="w-[164px] bg-[#ffffcc] border border-[#c8c8c8] pl-[4px] pr-[8px] pt-[4px] text-[#333] leading-[17px]">
          此种输入格式主要用于处理同一跨梁内不同范围存在不同箍筋信息的设计方式。
        </div>
      </div>
      <div className="flex items-center justify-between mt-[7px] h-[26px]">
        <span>小技巧&#xFF1A;双击可直接添加至钢筋信息</span>
        <div className="flex gap-[6px]">
          <div className="w-[80px] h-[26px] bg-[#2b7fe3] rounded-[3px] text-white flex items-center justify-center">确定</div>
          <div className="w-[80px] h-[26px] border border-[#d0d0d0] rounded-[3px] flex items-center justify-center">取消</div>
        </div>
      </div>
    </div>
  );
}

function StatusBtn({ w, on, caret, children }: { w: string; on?: boolean; caret?: boolean; children: ReactNode }) {
  return (
    <div className={clsx("h-[24px] rounded-[3px] border flex items-center justify-center gap-[4px] shrink-0", w, on ? "border-[#6aa6ec] bg-[#dbe9fb]" : "border-[#a8a8a8] bg-white")}>
      <svg viewBox="0 0 16 16" width="17" height="17" fill="none" stroke="#555">{children}</svg>
      {caret && <Caret c="border-t-[#444]" />}
    </div>
  );
}

function StatusBar() {
  return (
    <div className="h-[31px] bg-[#fbfbfb] border-t border-[#e2e2e2] flex items-center text-[#444] relative shrink-0">
      <span className="absolute left-[4px] tracking-[0.6px]">649104 Y = 354255</span>
      <div className="ml-[242px] flex whitespace-nowrap">
        <span className="w-[40px]">层高&#xFF1A;</span>
        <span className="w-[43px]">3.9</span>
        <span className="w-[41px]">标高&#xFF1A;</span>
        <span className="w-[93px]">-0.65~3.25</span>
        <span className="w-[102px]">1(1)</span>
        <span className="w-[37px]">隐藏&#xFF1A;</span>
        <span className="w-[66px]">0</span>
      </div>
      <div className="flex items-center gap-[3px]">
        <StatusBtn w="w-[25px]"><path d="M2 2v11h12M5 6v4h4" /></StatusBtn>
        <StatusBtn w="w-[36px]" on caret><rect x="2.5" y="2.5" width="11" height="12" rx="3" /><circle cx="2.5" cy="2.5" r="1.5" stroke={A} /></StatusBtn>
        <StatusBtn w="w-[25px]"><path d="M1 1l14 14M15 1L1 15" stroke="#aaa" /></StatusBtn>
        <StatusBtn w="w-[36px]" caret><path d="M1 14h13M2 14l10-10M6 11v3" /></StatusBtn>
        <StatusBtn w="w-[36px]" caret><path d="M1 5h6M4 2v6" /><rect x="5" y="10" width="10" height="3" fill="#555" /></StatusBtn>
        <StatusBtn w="w-[25px]"><rect x="2" y="2" width="10" height="10" strokeWidth="2" /><path d="M13 5v8H5M12 11l3 2-3 2z" fill="#555" /></StatusBtn>
        <StatusBtn w="w-[25px]"><path d="M2 15V8l5-5 6 1M9 8l4 3-4 2z" /></StatusBtn>
        <span className="ml-[6px] whitespace-nowrap">按鼠标左键选择梁图元&#xFF0C;按右键中止或 ESC 取消</span>
      </div>
    </div>
  );
}

export default function App() {
  return (
    <div className="relative w-[1897px] h-[1008px] overflow-hidden bg-[#f0f0f0] text-[12px] font-['Noto_Sans_CJK_SC','Liberation_Sans',sans-serif]">
      <Ribbon />
      <ComboBar />
      <div className="flex h-[843px]">
        <NavPanel />
        <div className="w-[4px] shrink-0" />
        <div className="w-[316px] shrink-0 flex flex-col gap-[5px]">
          <ListPanel />
          <PropPanel />
        </div>
        <div className="w-[4px] shrink-0 flex items-start pt-[130px]">
          <div className="w-[4px] h-[100px] bg-[#5c6670]" />
        </div>
        <div className="flex-1 flex flex-col min-w-0">
          <div className="relative h-[359px] bg-black shrink-0">
            <Drawing />
            <Palette />
            <div className="absolute right-0 top-[130px] w-[3px] h-[100px] bg-[#5c6670]" />
          </div>
          <div className="h-[4px] bg-white shrink-0 flex pl-[662px]">
            <div className="w-[100px] h-[4px] bg-[#5c6670]" />
          </div>
          <TablePanel />
        </div>
      </div>
      <StatusBar />
      <div className="h-[6px] bg-[#0d1214]" />
      <Dialog />
      <svg viewBox="0 0 1897 1008" width="1897" height="1008" fill="none" stroke="#f01fe8" strokeWidth="2.5" className="absolute left-0 top-0 z-20 pointer-events-none">
        <ellipse cx="1692" cy="596" rx="56" ry="32" transform="rotate(4 1692 596)" />
        <ellipse cx="1223" cy="757" rx="114" ry="79" />
        <ellipse cx="1007" cy="867" rx="120" ry="32" />
      </svg>
    </div>
  );
}
